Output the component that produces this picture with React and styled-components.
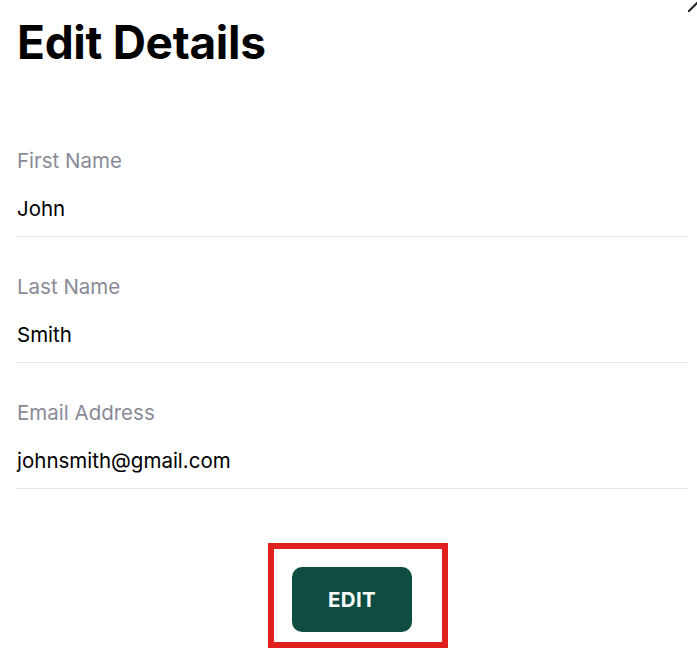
import React from "react";
import styled, { createGlobalStyle } from "styled-components";

const Global = createGlobalStyle`
  html, body {
    margin: 0;
    padding: 0;
    background: #ffffff;
    overflow: hidden;
  }
  body {
    font-family: Inter, "Noto Sans", "Liberation Sans", sans-serif;
    color: #000;
  }
`;

const Page = styled.div`
  position: relative;
  width: 697px;
  height: 655px;
  box-sizing: border-box;
  padding: 13px 9px 0 16px;
`;

const CloseIcon = styled.svg`
  position: absolute;
  top: -12px;
  right: -15px;
  width: 24px;
  height: 24px;
`;

const Title = styled.h1`
  margin: 0 0 40px 1px;
  font-size: 46px;
  line-height: 58px;
  font-weight: 700;
  letter-spacing: -0.3px;
`;

const Fields = styled.div`
  display: flex;
  flex-direction: column;
`;

const Field = styled.div`
  display: flex;
  flex-direction: column;
  gap: 24px;
  padding: 38px 0 15px 1px;
  border-bottom: 1px solid #e8e8e8;
`;

const Label = styled.div`
  font-size: 20.5px;
  line-height: 24px;
  color: #8a8a96;
`;

const Value = styled.div`
  font-size: 20.5px;
  line-height: 24px;
  color: #000;
`;

const Actions = styled.div`
  display: flex;
  justify-content: center;
  padding-top: 78px;
`;

const ButtonWrap = styled.div`
  position: relative;
`;

const Highlight = styled.div`
  position: absolute;
  left: -24px;
  top: -24px;
  right: -36px;
  bottom: -16px;
  border: 6px solid #e0201f;
  pointer-events: none;
`;

const EditButton = styled.button`
  width: 120px;
  height: 65px;
  border: none;
  border-radius: 10px;
  background: #0f4d42;
  color: #ffffff;
  font-family: Inter, "Liberation Sans", sans-serif;
  font-size: 20.5px;
  font-weight: 700;
  letter-spacing: 0.3px;
  cursor: pointer;
`;

const fields = [
  { label: "First Name", value: "John" },
  { label: "Last Name", value: "Smith" },
  { label: "Email Address", value: "johnsmith@gmail.com" },
];

export default function App() {
  return (
    <>
      <Global />
      <Page>
        <CloseIcon viewBox="0 0 24 24" fill="none" stroke="#222" strokeWidth="2" strokeLinecap="round">
          <path d="M0 24 L24 0" />
          <path d="M0 0 L24 24" />
        </CloseIcon>
        <Title>Edit Details</Title>
        <Fields>
          {fields.map((f) => (
            <Field key={f.label}>
              <Label>{f.label}</Label>
              <Value>{f.value}</Value>
            </Field>
          ))}
        </Fields>
        <Actions>
          <ButtonWrap>
            <Highlight />
            <EditButton>EDIT</EditButton>
          </ButtonWrap>
        </Actions>
      </Page>
    </>
  );
}
